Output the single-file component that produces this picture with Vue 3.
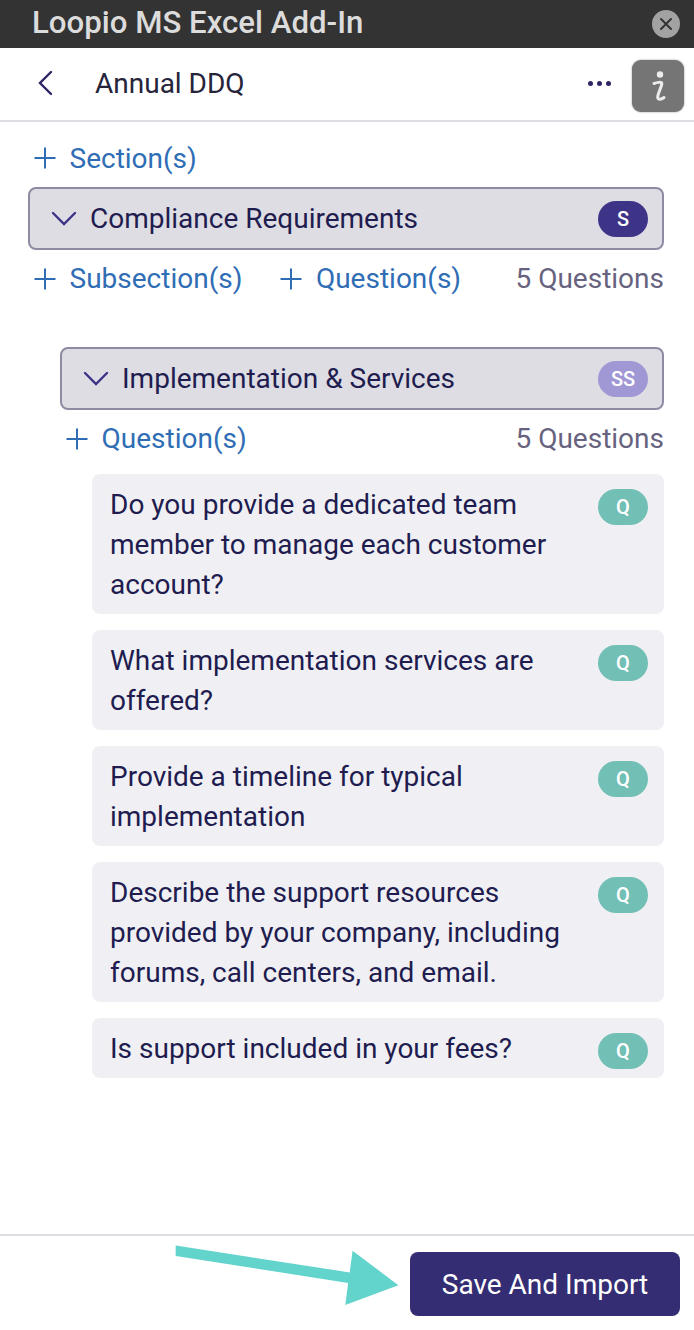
<template>
  <div class="pane">
    <div class="titlebar">
      <span class="titlebar-text">Loopio MS Excel Add-In</span>
      <span class="close">
        <svg width="14" height="14" viewBox="0 0 14 14"><path d="M2 2l10 10M12 2L2 12" stroke="#333" stroke-width="2" stroke-linecap="round" /></svg>
      </span>
    </div>

    <div class="topnav">
      <svg class="back" width="18" height="26" viewBox="0 0 18 26"><path d="M15 2L4 13l11 11" fill="none" stroke="#2f2565" stroke-width="2.4" stroke-linecap="round" /></svg>
      <span class="doc-name">Annual DDQ</span>
      <span class="dots"><i></i><i></i><i></i></span>
      <span class="info">
        <svg width="52" height="52" viewBox="0 0 52 52">
          <circle cx="28" cy="14.500" r="3.200" fill="#ececec" />
          <path d="M22 23.500C24.500 22.500 29.500 21.500 29.800 23.500C30 26 26 33 25.700 37C25.500 40 29.500 39.500 32 37.500" fill="none" stroke="#ececec" stroke-width="3" stroke-linecap="round" />
        </svg>
      </span>
    </div>

    <div class="content">
      <div class="action-row first">
        <a class="add"><svg class="plus" width="22" height="22" viewBox="0 0 22 22"><path d="M11 0.5v21M0.5 11h21" stroke="#2f6db5" stroke-width="2" /></svg>Section(s)</a>
      </div>

      <div class="group-head">
        <svg class="chevron" width="26" height="16" viewBox="0 0 26 16"><path d="M2 2l11 11L24 2" fill="none" stroke="#3d3387" stroke-width="2.4" stroke-linecap="round" /></svg>
        <span class="group-name">Compliance Requirements</span>
        <span class="tag tag-s">S</span>
      </div>
      <div class="action-row">
        <a class="add"><svg class="plus" width="22" height="22" viewBox="0 0 22 22"><path d="M11 0.5v21M0.5 11h21" stroke="#2f6db5" stroke-width="2" /></svg>Subsection(s)</a>
        <a class="add second"><svg class="plus" width="22" height="22" viewBox="0 0 22 22"><path d="M11 0.5v21M0.5 11h21" stroke="#2f6db5" stroke-width="2" /></svg>Question(s)</a>
        <span class="count">5 Questions</span>
      </div>

      <div class="subsection">
        <div class="group-head">
          <svg class="chevron" width="26" height="16" viewBox="0 0 26 16"><path d="M2 2l11 11L24 2" fill="none" stroke="#3d3387" stroke-width="2.4" stroke-linecap="round" /></svg>
          <span class="group-name">Implementation &amp; Services</span>
          <span class="tag tag-ss">SS</span>
        </div>
        <div class="action-row">
          <a class="add"><svg class="plus" width="22" height="22" viewBox="0 0 22 22"><path d="M11 0.5v21M0.5 11h21" stroke="#2f6db5" stroke-width="2" /></svg>Question(s)</a>
          <span class="count">5 Questions</span>
        </div>

        <div class="questions">
          <div v-for="q in questions" :key="q" class="question">
            <span class="question-text">{{ q }}</span>
            <span class="tag tag-q">Q</span>
          </div>
        </div>
      </div>
    </div>

    <div class="footer">
      <button class="save">Save And Import</button>
    </div>

    <svg class="callout" width="240" height="70" viewBox="0 0 240 70">
      <path d="M5.700 5.600L179.700 32.400L182.600 10.800L228.400 45.200L175.300 65L178.200 43L5.700 15.900Z" fill="#62d4cc" />
    </svg>
  </div>
</template>

<script setup>
const questions = [
  'Do you provide a dedicated team member to manage each customer account?',
  'What implementation services are offered?',
  'Provide a timeline for typical implementation',
  'Describe the support resources provided by your company, including forums, call centers, and email.',
  'Is support included in your fees?',
]
</script>

<style>
html, body {
  margin: 0;
  background: #fff;
}
</style>

<style scoped>
.pane {
  position: relative;
  width: 694px;
  height: 1330px;
  display: flex;
  flex-direction: column;
  overflow: hidden;
  font-family: Roboto, "Liberation Sans", sans-serif;
  font-size: 28px;
  color: #211c4f;
  background: #fff;
}
.titlebar {
  height: 48px;
  flex: none;
  display: flex;
  align-items: center;
  justify-content: space-between;
  padding: 0 14px 4px 32px;
  box-sizing: border-box;
  background: #333;
}
.titlebar-text {
  font-size: 31.2px;
  font-weight: 500;
  color: #dcdcdc;
}
.close {
  width: 28px;
  height: 28px;
  border-radius: 50%;
  background: #a2a2a2;
  display: flex;
  align-items: center;
  justify-content: center;
  margin-top: 3px;
}
.topnav {
  height: 74px;
  flex: none;
  box-sizing: border-box;
  display: flex;
  align-items: center;
  padding: 0 10px 2px 36px;
  border-bottom: 2px solid #dedde3;
}
.back {
  margin-right: 41px;
}
.doc-name {
  color: #26243a;
  flex: 1;
}
.dots {
  display: flex;
  gap: 4px;
  margin-right: 21px;
}
.dots i {
  width: 5px;
  height: 5px;
  border-radius: 50%;
  background: #2f2565;
}
.info {
  width: 52px;
  height: 52px;
  margin-top: 6px;
  border-radius: 9px;
  background: #757575;
  box-shadow: 0 0 2px #8d8d8d;
  overflow: hidden;
}
.info svg {
  display: block;
}
.content {
  flex: 1;
  padding: 0 30px 0 28px;
}
.action-row {
  height: 57px;
  display: flex;
  align-items: center;
  padding-left: 6px;
}
.action-row.first {
  height: 65px;
  padding-top: 7px;
  box-sizing: border-box;
}
.add {
  display: flex;
  align-items: center;
  gap: 13.5px;
  color: #2f6db5;
}
.add.second {
  margin-left: 38px;
}
.plus {
  flex: none;
}
.count {
  margin-left: auto;
  color: #67637f;
}
.group-head {
  height: 63px;
  box-sizing: border-box;
  display: flex;
  align-items: center;
  padding: 0 14px 0 21px;
  background: #dedde3;
  border: 2px solid #8e8aa3;
  border-radius: 8px;
}
.chevron {
  margin-right: 13px;
  flex: none;
}
.group-name {
  flex: 1;
}
.tag {
  flex: none;
  width: 50px;
  height: 36px;
  border-radius: 18px;
  color: #fff;
  font-size: 20px;
  font-weight: 500;
  line-height: 36px;
  text-align: center;
}
.tag-s {
  background: #3d3387;
}
.tag-ss {
  background: #a098d4;
}
.tag-q {
  background: #72bfb6;
}
.subsection {
  margin-top: 40px;
  margin-left: 32px;
}
.questions {
  margin-top: 7px;
  margin-left: 32px;
  display: flex;
  flex-direction: column;
  gap: 16px;
}
.question {
  display: flex;
  align-items: flex-start;
  justify-content: space-between;
  gap: 24px;
  padding: 11px 16px 9px 18px;
  background: #f0f0f4;
  border-radius: 8px;
  line-height: 40px;
}
.question .tag {
  margin-top: 4px;
}
.footer {
  height: 96px;
  flex: none;
  box-sizing: border-box;
  border-top: 2px solid #dedde3;
  display: flex;
  justify-content: flex-end;
  padding: 16px 14px 0 0;
}
.save {
  width: 270px;
  height: 64px;
  border: 0;
  border-radius: 8px;
  background: #352d73;
  color: #fff;
  font-family: inherit;
  font-size: 28px;
  padding: 0;
}
.callout {
  position: absolute;
  left: 170px;
  top: 1240px;
}
</style>
